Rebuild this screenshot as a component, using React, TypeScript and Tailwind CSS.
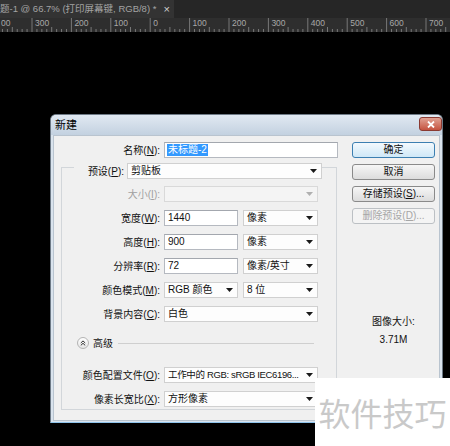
import React from 'react';

const Arrow = ({ dim }: { dim?: boolean }) => (
  <svg width="7" height="4" viewBox="0 0 7 4" className="shrink-0">
    <path d="M0 0h7L3.5 4z" fill={dim ? '#b0b0b0' : '#1a1a1a'} />
  </svg>
);

const Label = ({ text, k, w, dim }: { text: string; k: string; w: string; dim?: boolean }) => (
  <div className={`${w} shrink-0 text-right pr-[4px] whitespace-nowrap ${dim ? 'text-[#a0a0a0]' : 'text-[#111]'}`}>
    {text}(<u>{k}</u>):
  </div>
);

const Input = ({ w, value }: { w: string; value: string }) => (
  <div className={`${w} h-[16px] shrink-0 border border-[#b5b9c0] border-t-[#a3a7ae] bg-white pl-[3px] leading-[14px] text-[#111]`}>{value}</div>
);

const Select = ({ w, value, dim, tight }: { w: string; value: string; dim?: boolean; tight?: boolean }) => (
  <div
    className={`${w} h-[16px] shrink-0 flex items-center justify-between gap-[2px] border pl-[3px] pr-[4px] leading-[14px] ${
      dim ? 'border-[#d9d9d9] bg-[#f4f4f4]' : 'border-[#d0d0d0] bg-[#fdfdfd] text-[#111]'
    }`}
  >
    <span className={`whitespace-nowrap ${tight ? 'text-[9.5px] tracking-[-0.35px]' : ''}`}>{value}</span>
    <Arrow dim={dim} />
  </div>
);

const Button = ({ children, primary, dim }: { children: React.ReactNode; primary?: boolean; dim?: boolean }) => (
  <div
    className={`w-[83px] h-[16px] rounded-[3px] border flex items-center justify-center leading-none ${
      primary
        ? 'border-[#3c7fb1] bg-gradient-to-b from-[#f3f9fd] to-[#cfe8f7] text-[#111]'
        : dim
        ? 'border-[#bcc0c4] bg-[#f4f4f4] text-[#a6a6a6]'
        : 'border-[#8a8a8a] bg-gradient-to-b from-[#f6f6f6] to-[#dcdcdc] text-[#111]'
    }`}
  >
    {children}
  </div>
);

const Ruler = () => {
  const labels = ['300', '200', '100', '0', '100', '200', '300', '400', '500', '600', '700'];
  const step = 39.4;
  const ticks: number[] = [];
  for (let x = 32 - step; x < 450; x += step / 8) ticks.push(x);
  return (
    <div className="h-[14px] bg-[#2e2e2e]">
      <svg width="450" height="14" viewBox="0 0 450 14">
        {ticks.map((x, i) => {
          const m = i % 8;
          const h = m === 0 ? 14 : m === 4 ? 5 : 3;
          return <line key={i} x1={x} x2={x} y1={14 - h} y2={14} stroke="#8a8a8a" strokeWidth="0.8" />;
        })}
        <text x={1} y={8} fontSize="8.5" fill="#a8a8a8">00</text>
        {labels.map((l, i) => (
          <text key={i} x={32 + i * step + 3} y={8} fontSize="8.5" fill="#a8a8a8">
            {l}
          </text>
        ))}
      </svg>
    </div>
  );
};

const rows: { label: string; k: string; kind: 'sizes' | 'mode' | 'wide'; a?: string; b?: string }[] = [
  { label: '宽度', k: 'W', kind: 'sizes', a: '1440', b: '像素' },
  { label: '高度', k: 'H', kind: 'sizes', a: '900', b: '像素' },
  { label: '分辨率', k: 'R', kind: 'sizes', a: '72', b: '像素/英寸' },
  { label: '颜色模式', k: 'M', kind: 'mode', a: 'RGB 颜色', b: '8 位' },
  { label: '背景内容', k: 'C', kind: 'wide', a: '白色' },
];

const Dialog = () => (
  <div className="ml-[50px] mt-[82px] w-[393px] h-[309px] flex flex-col rounded-t-[6px] border border-[#6e7a86] bg-[#d9e3ed] border-b-[#8fc3ea]">
    <div className="h-[20px] flex items-start justify-between pl-[4px] rounded-t-[5px] bg-gradient-to-b from-[#e1e9f2] to-[#c3d1e0]">
      <span className="mt-[4px] text-[11px] leading-[12px] text-black">新建</span>
      <div className="mt-[2px] w-[23px] h-[14px] rounded-[3px] border border-[#8a3a32] bg-gradient-to-b from-[#e0a193] to-[#c4523f] flex items-center justify-center">
        <svg width="8" height="7" viewBox="0 0 8 7">
          <path d="M1 0.5l6 6M7 0.5l-6 6" stroke="#fff" strokeWidth="1.8" />
        </svg>
      </div>
    </div>
    <div className="flex-1 mx-[2px] mb-[1px] bg-[#f0f0f0] border border-[#b9c4cf] flex text-[10px]">
      {/* left column */}
      <div className="w-[284px] shrink-0 flex flex-col">
        <div className="mt-[6px] flex items-center h-[16px]">
          <Label text="名称" k="N" w="w-[110px]" />
          <div className="w-[174px] h-[16px] border border-[#b5b9c0] border-t-[#a3a7ae] bg-white pl-[2px] flex items-center">
            <span className="bg-[#3399ff] text-white leading-[12px] px-[1px]">未标题-2</span>
          </div>
        </div>

        <div className="ml-[7px] mt-[9px] w-[276px] border border-[#d2d6da] flex flex-col pb-[2px]">
          <div className="-mt-[5px] flex items-center h-[16px]">
            <div className="w-[12px] shrink-0" />
            <div className="w-[53px] shrink-0 bg-[#f0f0f0] text-right pr-[3px] whitespace-nowrap text-[#111]">
              预设(<u>P</u>):
            </div>
            <Select w="w-[195px]" value="剪贴板" />
          </div>

          <div className="mt-[7px] flex flex-col gap-[8px]">
            <div className="flex items-center h-[16px]">
              <Label text="大小" k="I" w="w-[102px]" dim />
              <Select w="w-[154px]" value="" dim />
            </div>
            {rows.map((r) => (
              <div key={r.k} className="flex items-center h-[16px]">
                <Label text={r.label} k={r.k} w="w-[102px]" />
                {r.kind === 'sizes' && (
                  <>
                    <Input w="w-[74px]" value={r.a!} />
                    <div className="w-[5px]" />
                    <Select w="w-[75px]" value={r.b!} />
                  </>
                )}
                {r.kind === 'mode' && (
                  <>
                    <Select w="w-[74px]" value={r.a!} />
                    <div className="w-[5px]" />
                    <Select w="w-[75px]" value={r.b!} />
                  </>
                )}
                {r.kind === 'wide' && <Select w="w-[154px]" value={r.a!} />}
              </div>
            ))}
          </div>

          <div className="mt-[15px] h-[12px] flex items-center">
            <div className="ml-[15px] w-[12px] h-[12px] rounded-full border border-[#b4b4b4] bg-gradient-to-b from-white to-[#e6e6e6] flex items-center justify-center">
              <svg width="6" height="6" viewBox="0 0 6 6">
                <path d="M0.8 3L3 0.9 5.2 3M0.8 5.4L3 3.3 5.2 5.4" fill="none" stroke="#333" strokeWidth="1" />
              </svg>
            </div>
            <span className="ml-[4px] text-[#111]">高级</span>
            <div className="ml-[5px] mr-[22px] flex-1 h-px bg-[#cfcfcf]" />
          </div>

          <div className="mt-[18px] flex flex-col gap-[8px]">
            <div className="flex items-center h-[16px]">
              <Label text="颜色配置文件" k="O" w="w-[102px]" />
              <Select w="w-[154px]" value="工作中的 RGB: sRGB IEC6196..." tight />
            </div>
            <div className="flex items-center h-[16px]">
              <Label text="像素长宽比" k="X" w="w-[102px]" />
              <Select w="w-[154px]" value="方形像素" />
            </div>
          </div>
        </div>
      </div>

      {/* right column */}
      <div className="flex-1 pl-[14px] flex flex-col">
        <div className="mt-[6px] flex flex-col gap-[6px]">
          <Button primary>确定</Button>
          <Button>取消</Button>
          <Button>
            存储预设(<u>S</u>)...
          </Button>
          <Button dim>
            删除预设(<u>D</u>)...
          </Button>
        </div>
        <div className="mt-[91px] w-[83px] text-center text-[#111] leading-[14px]">图像大小:</div>
        <div className="mt-[4px] w-[83px] text-center text-[#111] leading-[14px]">3.71M</div>
      </div>
    </div>
  </div>
);

export default function App() {
  return (
    <div className="relative w-[450px] h-[446px] overflow-hidden bg-black [font-family:'Liberation_Sans','Noto_Sans_CJK_SC',sans-serif]">
      <div className="flex h-[18px] bg-[#262626]">
        <div className="flex items-center w-[174px] bg-[#333333] text-[9.5px] text-[#a3a3a3] whitespace-nowrap">
          <span>题-1 @ 66.7% (打印屏幕键, RGB/8) *</span>
          <span className="ml-[7px] text-[11px] text-[#d0d0d0]">×</span>
        </div>
      </div>
      <Ruler />
      <Dialog />
      <div className="absolute left-[315px] top-[378px] w-[135px] h-[68px] bg-white flex items-center justify-center text-[32px] leading-none text-[#c9c9c9] [font-family:'Noto_Sans_CJK_SC',sans-serif]">
        软件技巧
      </div>
    </div>
  );
}
